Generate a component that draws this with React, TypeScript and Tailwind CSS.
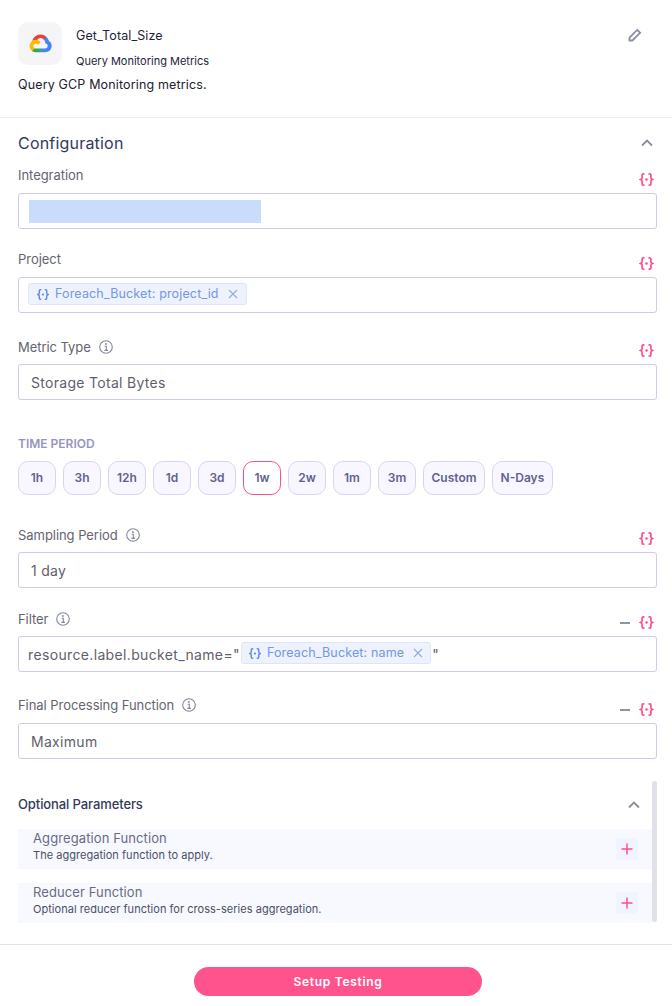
import React from 'react';

const periods = ['1h', '3h', '12h', '1d', '3d', '1w', '2w', '1m', '3m', 'Custom', 'N-Days'];

function BracesIcon({ className }: { className: string }) {
  return (
    <svg viewBox="0 0 14 13" fill="none" className={className}>
      <path
        d="M4.3 0.9H3.7C2.9 0.9 2.6 1.4 2.6 2.1V4.8C2.6 5.5 2.2 6 1 6.5C2.2 7 2.6 7.5 2.6 8.2V10.9C2.6 11.6 2.9 12.1 3.7 12.1H4.3M9.7 0.9H10.3C11.1 0.9 11.4 1.4 11.4 2.1V4.8C11.4 5.5 11.8 6 13 6.5C11.8 7 11.4 7.5 11.4 8.2V10.9C11.4 11.6 11.1 12.1 10.3 12.1H9.7"
        stroke="currentColor"
        strokeWidth="1.7"
        strokeLinecap="round"
      />
      <circle cx="7" cy="6.5" r="1.3" fill="currentColor" />
    </svg>
  );
}

function InfoIcon() {
  return (
    <svg viewBox="0 0 14 14" fill="none" className="w-[14px] h-[14px] text-[#83879b]">
      <circle cx="7" cy="7" r="6.3" stroke="currentColor" strokeWidth="1.1" />
      <path d="M5.6 6.2H7.3V10.2M5.4 10.4H9" stroke="currentColor" strokeWidth="1.1" />
      <circle cx="6.9" cy="4" r="0.9" fill="currentColor" />
    </svg>
  );
}

function CollapseIcon() {
  return (
    <svg viewBox="0 0 12 8" fill="none" className="w-[12px] h-[8px] text-[#8d8d9b]">
      <path d="M1 6.5L6 1.5L11 6.5" stroke="currentColor" strokeWidth="1.8" />
    </svg>
  );
}

function PlusButton() {
  return (
    <div className="w-[22px] h-[22px] rounded-[3px] bg-[#f0f4fe] flex items-center justify-center">
      <svg viewBox="0 0 12 12" fill="none" className="w-[12px] h-[12px] text-[#ff4f8b]">
        <path d="M6 0.5V11.5M0.5 6H11.5" stroke="currentColor" strokeWidth="1.5" />
      </svg>
    </div>
  );
}

function Chip({ label, className }: { label: string; className: string }) {
  return (
    <span
      className={`h-[22px] mb-[2px] flex items-center bg-[#edf2fc] border border-[#dde6f8] rounded-[3px] text-[12.5px] text-[#7398e6] tracking-[0.15px] ${className}`}
    >
      <BracesIcon className="w-[12px] h-[11px] text-[#5f8de6] mr-[6px]" />
      {label}
      <svg viewBox="0 0 10 10" fill="none" className="w-[10px] h-[10px] text-[#94acdd] ml-[9px]">
        <path d="M1 1L9 9M9 1L1 9" stroke="currentColor" strokeWidth="1.1" />
      </svg>
    </span>
  );
}

function Field({
  label,
  info,
  minus,
  low,
  className,
  children,
}: {
  label: string;
  info?: boolean;
  minus?: boolean;
  low?: boolean;
  className?: string;
  children: React.ReactNode;
}) {
  return (
    <div className={className}>
      <div className="h-[28px] flex justify-between">
        <div className={`h-5 flex items-center gap-[8px] ${low ? 'mt-[1px]' : ''}`}>
          <span className="text-[13px] leading-5 text-[#64646f] tracking-[-0.05px]">{label}</span>
          {info && <InfoIcon />}
        </div>
        <div className="self-end mb-[7px] mr-[3px] flex items-center gap-[9px]">
          {minus && <span className="w-[10px] h-[2px] bg-[#8e94a6]" />}
          <BracesIcon className="w-[15px] h-[13px] text-[#ff4f8b]" />
        </div>
      </div>
      <div className="h-[36px] border border-[#cfcbe8] rounded-[3px] bg-white flex items-center text-[14px] text-[#5f5f6b] tracking-[0.3px]">
        {children}
      </div>
    </div>
  );
}

function OptionalRow({ title, desc, className }: { title: string; desc: string; className: string }) {
  return (
    <div className={`h-[40px] bg-[#f8f9fe] pl-[15px] pr-[14px] flex items-center justify-between ${className}`}>
      <div className="mb-[4px]">
        <div className="text-[13px] leading-[17px] text-[#686b85] tracking-[0.1px]">{title}</div>
        <div className="text-[11px] leading-[17px] text-[#4a4f68] tracking-[0.03px]">{desc}</div>
      </div>
      <PlusButton />
    </div>
  );
}

export default function App() {
  return (
    <div className="w-[672px] h-[1006px] bg-white overflow-hidden font-['Inter',sans-serif]">
      {/* header */}
      <div className="h-[118px] border-b border-[#eeeeef] px-[18px] pt-[22px] relative">
        <div className="flex">
          <div className="w-[44px] h-[43px] rounded-[10px] bg-[#f5f5f8] flex items-center justify-center">
            <svg viewBox="0 0 24 24" className="w-[23px] h-[23px]">
              <path fill="#EA4335" d="M15.24 7.7h.7l2-2 .1-.85A8.98 8.98 0 0 0 3.4 9.24c.22-.09.46-.1.7-.04l4-.66s.2-.33.31-.31a4.99 4.99 0 0 1 6.83-.52z" />
              <path fill="#4285F4" d="M20.76 9.24a9 9 0 0 0-2.72-4.38l-2.8 2.8a4.98 4.98 0 0 1 1.83 3.95v.5a2.5 2.5 0 1 1 0 5h-5l-.5.5v3l.5.5h5a6.5 6.5 0 0 0 3.69-11.87z" />
              <path fill="#34A853" d="M7.07 21.11h5v-4h-5a2.48 2.48 0 0 1-1.03-.22l-.7.22-2.01 2-.18.7a6.47 6.47 0 0 0 3.92 1.3z" />
              <path fill="#FBBC05" d="M7.07 8.11a6.5 6.5 0 0 0-3.92 11.65l2.9-2.9a2.5 2.5 0 1 1 3.31-3.31l2.9-2.9a6.5 6.5 0 0 0-5.19-2.54z" />
            </svg>
          </div>
          <div className="ml-[14px] text-[#1f2440]">
            <div className="text-[12.5px] leading-[16px] mt-[6px] tracking-[0.1px]">Get_Total_Size</div>
            <div className="text-[11px] leading-[16px] mt-[9px]">Query Monitoring Metrics</div>
          </div>
          <svg viewBox="0 0 15 15" fill="none" className="absolute right-[30px] top-[28px] w-[15px] h-[15px] text-[#8b8fa3]">
            <path d="M10.2 1.9L13.1 4.8L5.4 12.5H2.5V9.6L10.2 1.9Z" stroke="currentColor" strokeWidth="1.8" />
          </svg>
        </div>
        <div className="text-[12.5px] leading-5 text-[#1c2030] mt-[6px] tracking-[0.15px]">Query GCP Monitoring metrics.</div>
      </div>

      {/* configuration */}
      <div className="pl-[18px] pr-[15px]">
        <div className="h-[47px] pt-[2px] pr-[4px] flex items-center justify-between">
          <span className="text-[16px] text-[#34395a] tracking-[0.2px]">Configuration</span>
          <CollapseIcon />
        </div>

        <Field label="Integration">
          <span className="ml-[10px] w-[232px] h-[23px] bg-[#c9ddfb]" />
        </Field>

        <Field label="Project" className="mt-[20px]">
          <Chip label="Foreach_Bucket: project_id" className="ml-[9px] px-[8px]" />
        </Field>

        <Field label="Metric Type" info low className="mt-[23px]">
          <span className="ml-[12px]">Storage Total Bytes</span>
        </Field>

        <div className="mt-[36px] text-[12px] leading-4 font-semibold text-[#9694bd]">TIME PERIOD</div>
        <div className="mt-[9px] flex gap-[7px]">
          {periods.map((p) => (
            <div
              key={p}
              className={`min-w-[38px] h-[34px] px-[7.5px] rounded-[10px] border flex items-center justify-center text-[12px] font-semibold text-[#63618f] ${
                p === '1w' ? 'border-[#ff4f8b] bg-white' : 'border-[#d9d4f1] bg-[#f8f7ff]'
              }`}
            >
              {p}
            </div>
          ))}
        </div>

        <Field label="Sampling Period" info low className="mt-[29px]">
          <span className="ml-[12px]">1 day</span>
        </Field>

        <Field label="Filter" info minus low className="mt-[20px]">
          <span className="ml-[9px] tracking-[0.35px]">resource.label.bucket_name="</span>
          <Chip label="Foreach_Bucket: name" className="ml-[1px] px-[7px]" />
          <span className="ml-[1px]">"</span>
        </Field>

        <Field label="Final Processing Function" info minus className="mt-[23px]">
          <span className="ml-[12px]">Maximum</span>
        </Field>

        {/* optional parameters */}
        <div className="relative mt-[22px] h-[142px]">
          <div className="h-[48px] pr-[17px] flex items-center justify-between">
            <span className="text-[13px] font-medium text-[#34395a] tracking-[-0.1px]">Optional Parameters</span>
            <CollapseIcon />
          </div>
          <OptionalRow
            className="mr-[5px]"
            title="Aggregation Function"
            desc="The aggregation function to apply."
          />
          <OptionalRow
            className="mr-[5px] mt-[14px]"
            title="Reducer Function"
            desc="Optional reducer function for cross-series aggregation."
          />
          <div className="absolute right-0 top-0 w-[5px] h-[141px] rounded-full bg-[#e0e0e8]" />
        </div>
      </div>

      {/* footer */}
      <div className="mt-[21px] border-t border-[#e2e2e4] pt-[22px] flex justify-center">
        <button className="ml-[4px] w-[288px] h-[29px] rounded-full bg-[#ff538d] text-white text-[12px] font-semibold tracking-[0.7px]">
          Setup Testing
        </button>
      </div>
    </div>
  );
}
